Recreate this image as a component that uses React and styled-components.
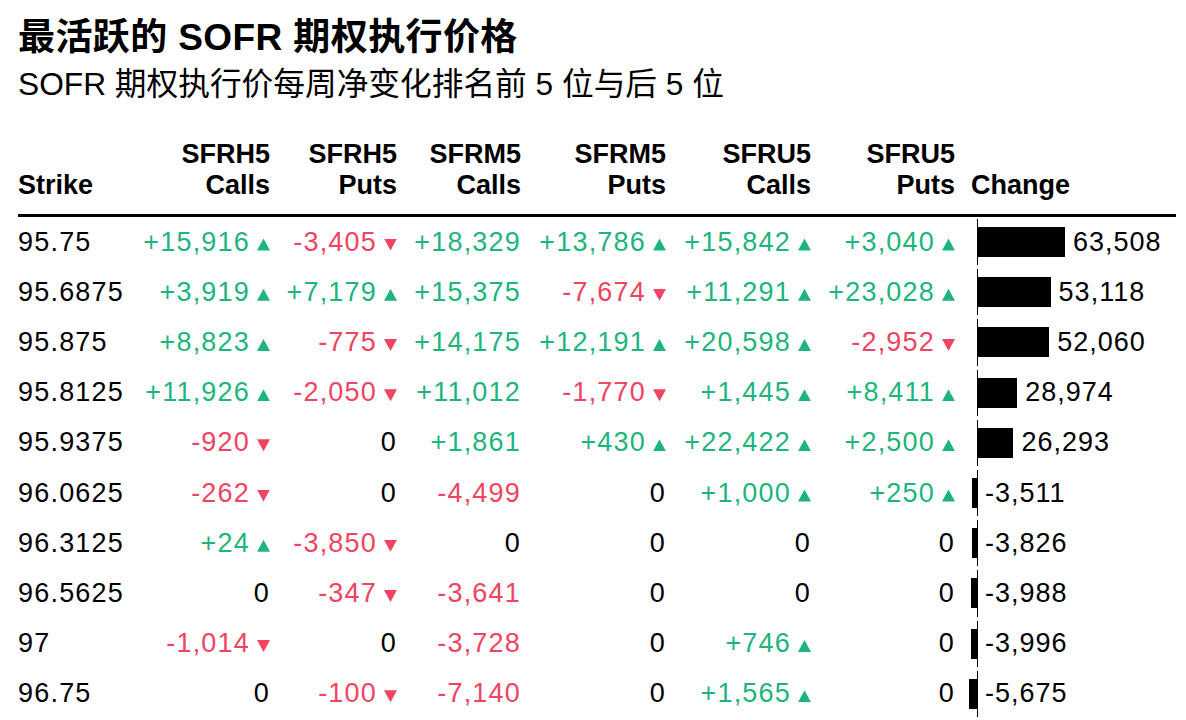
import React from 'react';
import styled, { createGlobalStyle } from 'styled-components';

const GREEN = '#1db57d';
const RED = '#f04462';
const COLS = '122px 130px 127px 124px 145px 145px 144px 221px';
const AXIS = 22;
const PX_PER_UNIT = 88 / 63508;

const columns = [
  { top: 'SFRH5', bottom: 'Calls', arrows: true },
  { top: 'SFRH5', bottom: 'Puts', arrows: true },
  { top: 'SFRM5', bottom: 'Calls', arrows: false },
  { top: 'SFRM5', bottom: 'Puts', arrows: true },
  { top: 'SFRU5', bottom: 'Calls', arrows: true },
  { top: 'SFRU5', bottom: 'Puts', arrows: true },
];

const rows = [
  ['95.75', '+15,916', '-3,405', '+18,329', '+13,786', '+15,842', '+3,040', 63508],
  ['95.6875', '+3,919', '+7,179', '+15,375', '-7,674', '+11,291', '+23,028', 53118],
  ['95.875', '+8,823', '-775', '+14,175', '+12,191', '+20,598', '-2,952', 52060],
  ['95.8125', '+11,926', '-2,050', '+11,012', '-1,770', '+1,445', '+8,411', 28974],
  ['95.9375', '-920', '0', '+1,861', '+430', '+22,422', '+2,500', 26293],
  ['96.0625', '-262', '0', '-4,499', '0', '+1,000', '+250', -3511],
  ['96.3125', '+24', '-3,850', '0', '0', '0', '0', -3826],
  ['96.5625', '0', '-347', '-3,641', '0', '0', '0', -3988],
  ['97', '-1,014', '0', '-3,728', '0', '+746', '0', -3996],
  ['96.75', '0', '-100', '-7,140', '0', '+1,565', '0', -5675],
];

const GlobalStyle = createGlobalStyle`
  body {
    margin: 0;
    background: #fff;
    color: #000;
    font-family: "Liberation Sans", "Noto Sans CJK SC", sans-serif;
  }
`;

function trendOf(value) {
  if (value.startsWith('+')) return 'up';
  if (value.startsWith('-')) return 'down';
  return 'flat';
}

function ValueCell({ value, arrows }) {
  const trend = trendOf(value);
  return (
    <NumCell>
      <Value $trend={trend}>{value}</Value>
      {arrows && trend !== 'flat' && <Arrow $trend={trend} />}
    </NumCell>
  );
}

function ChangeBar({ change }) {
  const width = Math.abs(change) * PX_PER_UNIT;
  return (
    <ChangeCell>
      <Bar style={{ width, marginLeft: change < 0 ? -width : 0 }} />
      <ChangeLabel>{change.toLocaleString('en-US')}</ChangeLabel>
    </ChangeCell>
  );
}

export default function App() {
  return (
    <Page>
      <GlobalStyle />
      <Title>最活跃的 SOFR 期权执行价格</Title>
      <Subtitle>SOFR 期权执行价每周净变化排名前 5 位与后 5 位</Subtitle>
      <Table>
        <HeadRow>
          <HeadCell>Strike</HeadCell>
          {columns.map((col, i) => (
            <HeadCell key={i} $align="right">
              {col.top}
              <br />
              {col.bottom}
            </HeadCell>
          ))}
          <HeadCell $indent>Change</HeadCell>
        </HeadRow>
        {rows.map((row) => (
          <Row key={row[0]}>
            <StrikeCell>{row[0]}</StrikeCell>
            {columns.map((col, i) => (
              <ValueCell key={i} value={row[i + 1]} arrows={col.arrows} />
            ))}
            <ChangeBar change={row[7]} />
          </Row>
        ))}
      </Table>
    </Page>
  );
}

const Page = styled.div`
  width: 1158px;
  padding: 15px 10px 0 18px;
  height: 705px;
  overflow: hidden;
`;

const Title = styled.h1`
  margin: 0;
  font-size: 37px;
  line-height: 46px;
  font-weight: 700;
  letter-spacing: 0.4px;
`;

const Subtitle = styled.div`
  margin-top: 3px;
  font-size: 31.7px;
  line-height: 40px;
  font-weight: 400;
`;

const Table = styled.div`
  margin-top: 35px;
`;

const HeadRow = styled.div`
  display: grid;
  grid-template-columns: ${COLS};
  align-items: end;
  border-bottom: 3px solid #000;
  padding-bottom: 13px;
`;

const HeadCell = styled.div`
  font-size: 27px;
  line-height: 31px;
  font-weight: 700;
  text-align: ${(p) => p.$align || 'left'};
  padding-left: ${(p) => (p.$indent ? '16px' : '0')};
`;

const Row = styled.div`
  display: grid;
  grid-template-columns: ${COLS};
  align-items: center;
  height: 50.2px;
  font-size: 27px;
  letter-spacing: 1.2px;
`;

const StrikeCell = styled.div`
  white-space: nowrap;
`;

const NumCell = styled.div`
  display: flex;
  justify-content: flex-end;
  align-items: baseline;
  white-space: nowrap;
`;

const Value = styled.span`
  color: ${(p) => (p.$trend === 'up' ? GREEN : p.$trend === 'down' ? RED : '#000')};
`;

const Arrow = styled.span`
  display: inline-block;
  width: 13px;
  height: 12px;
  margin-left: 7px;
  background: ${(p) => (p.$trend === 'up' ? GREEN : RED)};
  clip-path: ${(p) =>
    p.$trend === 'up'
      ? 'polygon(50% 0, 100% 100%, 0 100%)'
      : 'polygon(0 0, 100% 0, 50% 100%)'};
`;

const ChangeCell = styled.div`
  position: relative;
  align-self: stretch;
  display: flex;
  align-items: center;
  padding-left: ${AXIS}px;

  &::before {
    content: '';
    position: absolute;
    left: ${AXIS}px;
    top: 2px;
    bottom: 2px;
    width: 1px;
    background: #000;
  }
`;

const Bar = styled.div`
  height: 30px;
  flex: none;
  background: #000;
`;

const ChangeLabel = styled.span`
  margin-left: 8px;
  white-space: nowrap;
  letter-spacing: 1px;
`;
